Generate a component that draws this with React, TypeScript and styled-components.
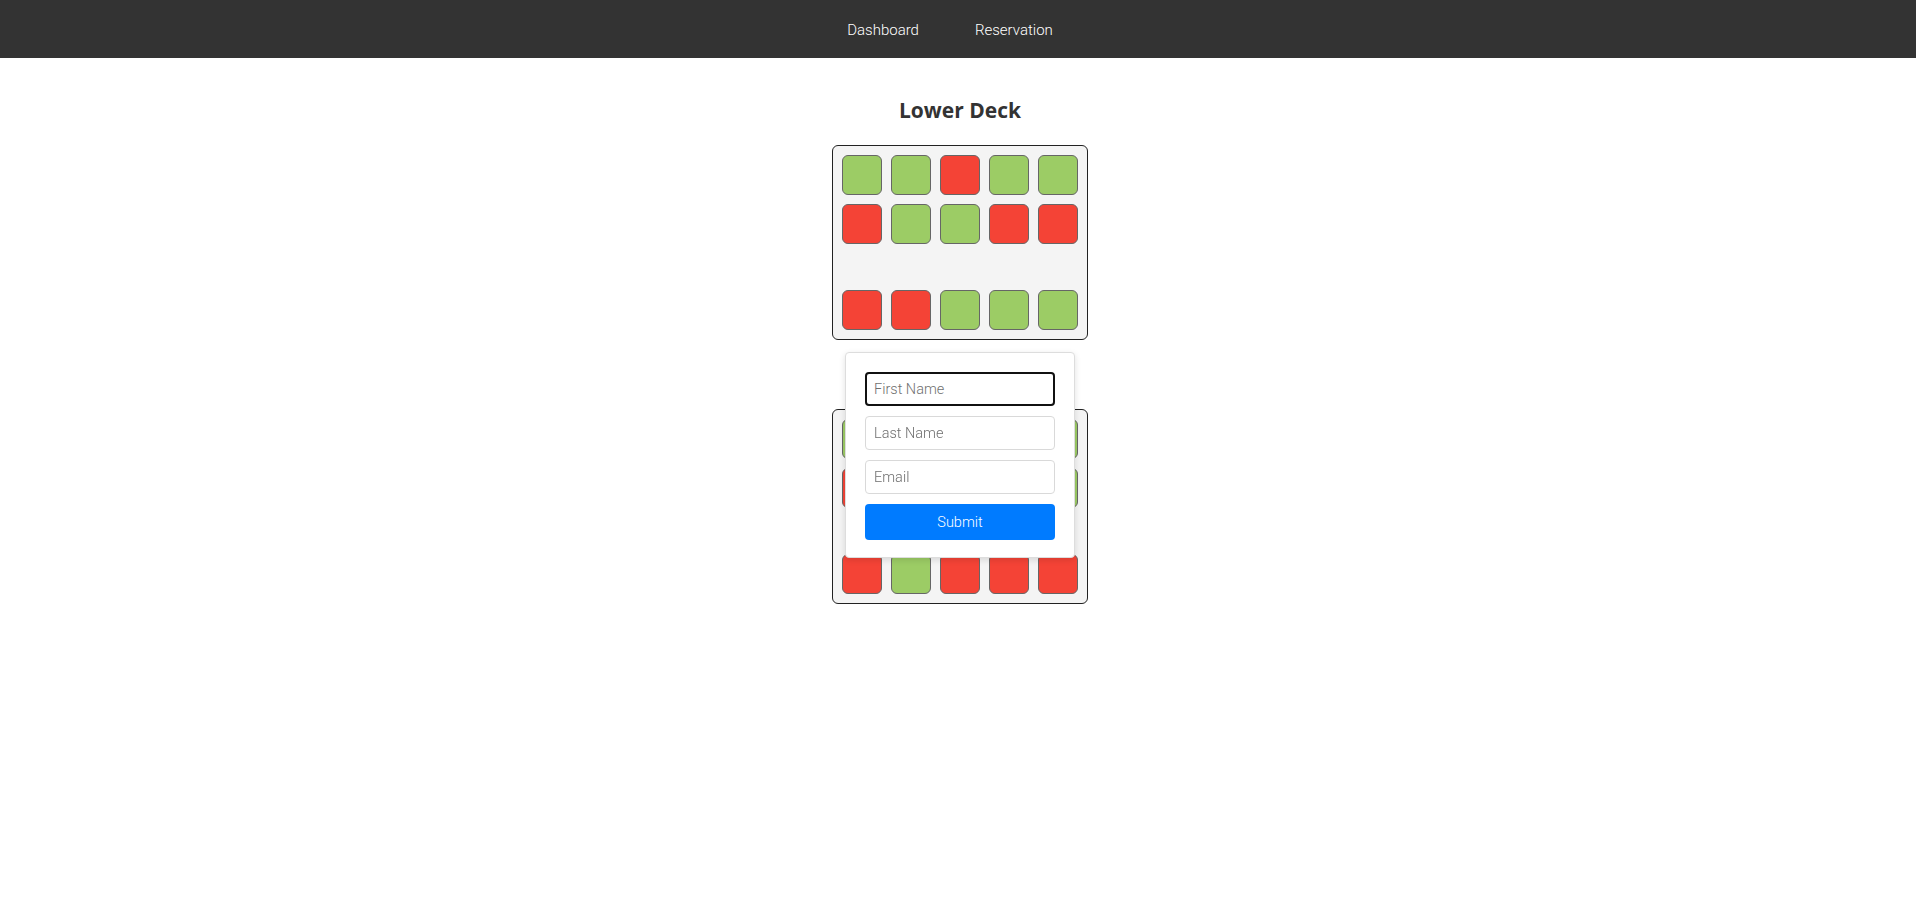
import React from "react";
import styled, { createGlobalStyle } from "styled-components";

const GlobalStyle = createGlobalStyle`
  html, body { margin: 0; padding: 0; background: #fff; }
  body { font-family: Roboto, "Liberation Sans", sans-serif; }
  * { box-sizing: border-box; }
`;

const NavBar = styled.nav`
  height: 58px;
  background: #333333;
  display: flex;
  align-items: center;
  justify-content: center;
  padding-right: 16px;
  padding-top: 2px;
`;

const NavLink = styled.a`
  color: #ffffff;
  font-family: Roboto, "Liberation Sans", sans-serif;
  font-weight: 300;
  font-size: 15px;
  text-decoration: none;
  margin: 0 28px;
  cursor: pointer;
`;

const Main = styled.main`
  display: flex;
  flex-direction: column;
  align-items: center;
  padding-top: 18px;
  padding-left: 4px;
`;

const DeckTitle = styled.h2`
  font-family: "Open Sans", Lato, sans-serif;
  font-weight: 700;
  font-size: 21px;
  line-height: 27px;
  color: #333333;
  margin: 21px 0;
`;

const DeckBox = styled.div`
  border: 1px solid #222;
  border-radius: 6px;
  background: #f4f4f4;
  padding: 9px;
  display: flex;
  flex-direction: column;
  gap: 9px;
`;

const SeatRow = styled.div`
  display: flex;
  gap: 9px;
`;

const Aisle = styled.div`
  height: 28px;
`;

const Seat = styled.div<{ $taken: boolean }>`
  width: 40px;
  height: 40px;
  border: 1px solid #666;
  border-radius: 6px;
  background: ${(p) => (p.$taken ? "#f44336" : "#9ccc65")};
`;

const Popup = styled.form`
  position: fixed;
  top: calc(50% + 2px);
  left: calc(50% + 2px);
  transform: translate(-50%, -50%);
  width: 230px;
  background: #ffffff;
  border: 1px solid #dddddd;
  border-radius: 4px;
  box-shadow: 0 2px 6px rgba(0, 0, 0, 0.12);
  padding: 19px 19px 17px;
  display: flex;
  flex-direction: column;
  gap: 10px;
`;

const Field = styled.input<{ $active?: boolean }>`
  height: 34px;
  width: 100%;
  border: ${(p) => (p.$active ? "2px solid #111" : "1px solid #d9d9d9")};
  border-radius: 4px;
  padding: 0 ${(p) => (p.$active ? "7px" : "8px")};
  font-family: Roboto, "Liberation Sans", sans-serif;
  font-weight: 300;
  font-size: 14.5px;
  color: #333;
  outline: none;
  &::placeholder { color: #6f6f6f; }
`;

const SubmitButton = styled.button`
  height: 36px;
  width: 100%;
  border: none;
  border-radius: 4px;
  background: #007bff;
  color: #ffffff;
  font-family: Roboto, "Liberation Sans", sans-serif;
  font-weight: 300;
  font-size: 14.5px;
  cursor: pointer;
`;

type Deck = { name: string; rows: boolean[][] };

const decks: Deck[] = [
  {
    name: "Lower Deck",
    rows: [
      [false, false, true, false, false],
      [true, false, false, true, true],
      [true, true, false, false, false],
    ],
  },
  {
    name: "Upper Deck",
    rows: [
      [false, true, false, true, false],
      [true, false, true, false, false],
      [true, false, true, true, true],
    ],
  },
];

function DeckView({ deck }: { deck: Deck }) {
  return (
    <>
      <DeckTitle>{deck.name}</DeckTitle>
      <DeckBox>
        {deck.rows.map((row, ri) => (
          <React.Fragment key={ri}>
            {ri === 2 && <Aisle />}
            <SeatRow>
              {row.map((taken, si) => (
                <Seat key={si} $taken={taken} />
              ))}
            </SeatRow>
          </React.Fragment>
        ))}
      </DeckBox>
    </>
  );
}

export default function App() {
  return (
    <>
      <GlobalStyle />
      <NavBar>
        <NavLink>Dashboard</NavLink>
        <NavLink>Reservation</NavLink>
      </NavBar>
      <Main>
        {decks.map((d) => (
          <DeckView key={d.name} deck={d} />
        ))}
      </Main>
      <Popup onSubmit={(e) => e.preventDefault()}>
        <Field $active autoFocus placeholder="First Name" />
        <Field placeholder="Last Name" />
        <Field placeholder="Email" />
        <SubmitButton type="submit">Submit</SubmitButton>
      </Popup>
    </>
  );
}
